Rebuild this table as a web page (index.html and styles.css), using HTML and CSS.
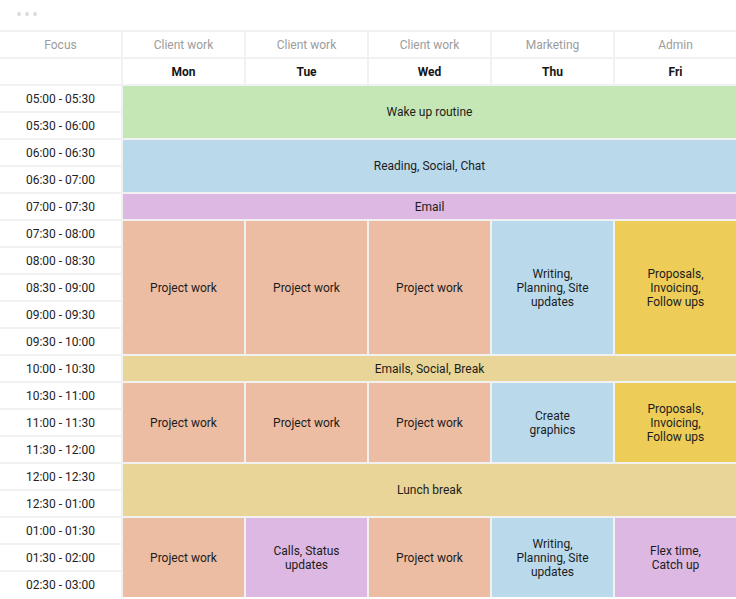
FILE: index.html
```html
<!DOCTYPE html>
<html>
<head>
<meta charset="utf-8">
<link rel="stylesheet" href="styles.css">
</head>
<body>
<div class="topbar"><span class="dot"></span><span class="dot"></span><span class="dot"></span></div>
<div class="grid">
  <div class="cell head">Focus</div>
  <div class="cell head">Client work</div>
  <div class="cell head">Client work</div>
  <div class="cell head">Client work</div>
  <div class="cell head">Marketing</div>
  <div class="cell head">Admin</div>

  <div class="cell day"></div>
  <div class="cell day">Mon</div>
  <div class="cell day">Tue</div>
  <div class="cell day">Wed</div>
  <div class="cell day">Thu</div>
  <div class="cell day">Fri</div>

  <div class="cell time r3">05:00 - 05:30</div>
  <div class="cell time r4">05:30 - 06:00</div>
  <div class="cell time r5">06:00 - 06:30</div>
  <div class="cell time r6">06:30 - 07:00</div>
  <div class="cell time r7">07:00 - 07:30</div>
  <div class="cell time r8">07:30 - 08:00</div>
  <div class="cell time r9">08:00 - 08:30</div>
  <div class="cell time r10">08:30 - 09:00</div>
  <div class="cell time r11">09:00 - 09:30</div>
  <div class="cell time r12">09:30 - 10:00</div>
  <div class="cell time r13">10:00 - 10:30</div>
  <div class="cell time r14">10:30 - 11:00</div>
  <div class="cell time r15">11:00 - 11:30</div>
  <div class="cell time r16">11:30 - 12:00</div>
  <div class="cell time r17">12:00 - 12:30</div>
  <div class="cell time r18">12:30 - 01:00</div>
  <div class="cell time r19">01:00 - 01:30</div>
  <div class="cell time r20">01:30 - 02:00</div>
  <div class="cell time r21">02:30 - 03:00</div>

  <div class="cell block green wide s-wake">Wake up routine</div>
  <div class="cell block blue wide s-read">Reading, Social, Chat</div>
  <div class="cell block purple wide s-email">Email</div>

  <div class="cell block salmon c2 s-am1">Project work</div>
  <div class="cell block salmon c3 s-am1">Project work</div>
  <div class="cell block salmon c4 s-am1">Project work</div>
  <div class="cell block blue c5 s-am1">Writing,<br>Planning, Site<br>updates</div>
  <div class="cell block gold c6 s-am1">Proposals,<br>Invoicing,<br>Follow ups</div>

  <div class="cell block tan wide s-break">Emails, Social, Break</div>

  <div class="cell block salmon c2 s-am2">Project work</div>
  <div class="cell block salmon c3 s-am2">Project work</div>
  <div class="cell block salmon c4 s-am2">Project work</div>
  <div class="cell block blue c5 s-am2">Create<br>graphics</div>
  <div class="cell block gold c6 s-am2">Proposals,<br>Invoicing,<br>Follow ups</div>

  <div class="cell block tan wide s-lunch">Lunch break</div>

  <div class="cell block salmon c2 s-pm">Project work</div>
  <div class="cell block purple c3 s-pm">Calls, Status<br>updates</div>
  <div class="cell block salmon c4 s-pm">Project work</div>
  <div class="cell block blue c5 s-pm">Writing,<br>Planning, Site<br>updates</div>
  <div class="cell block purple c6 s-pm">Flex time,<br>Catch up</div>
</div>
</body>
</html>
```
FILE: styles.css
```css
html, body {
  margin: 0;
  padding: 0;
  background: #ffffff;
  font-family: Roboto, "Liberation Sans", Arial, sans-serif;
}

.topbar {
  height: 30px;
  display: flex;
  align-items: center;
  gap: 4px;
  padding-left: 17px;
  padding-bottom: 2px;
  box-sizing: border-box;
}

.dot {
  width: 4px;
  height: 4px;
  border-radius: 50%;
  background: #dcdcdc;
}

.grid {
  display: grid;
  grid-template-columns: 121px repeat(5, 1fr);
  grid-auto-rows: 25px;
  gap: 2px;
  padding-top: 2px;
  background: #f1f1f1;
}

.cell {
  display: flex;
  align-items: center;
  justify-content: center;
  text-align: center;
  font-size: 12px;
  line-height: 14px;
  background: #ffffff;
  color: #1e1e1e;
}

.head {
  color: #9c9c9c;
  font-size: 12px;
}

.day {
  font-weight: bold;
  color: #151515;
}

.time {
  grid-column: 1;
  color: #222222;
}

.r3 { grid-row: 3; }
.r4 { grid-row: 4; }
.r5 { grid-row: 5; }
.r6 { grid-row: 6; }
.r7 { grid-row: 7; }
.r8 { grid-row: 8; }
.r9 { grid-row: 9; }
.r10 { grid-row: 10; }
.r11 { grid-row: 11; }
.r12 { grid-row: 12; }
.r13 { grid-row: 13; }
.r14 { grid-row: 14; }
.r15 { grid-row: 15; }
.r16 { grid-row: 16; }
.r17 { grid-row: 17; }
.r18 { grid-row: 18; }
.r19 { grid-row: 19; }
.r20 { grid-row: 20; }
.r21 { grid-row: 21; }

.block { color: #1c1c1c; }

.wide { grid-column: 2 / 7; }
.c2 { grid-column: 2; }
.c3 { grid-column: 3; }
.c4 { grid-column: 4; }
.c5 { grid-column: 5; }
.c6 { grid-column: 6; }

.s-wake { grid-row: 3 / 5; }
.s-read { grid-row: 5 / 7; }
.s-email { grid-row: 7 / 8; }
.s-am1 { grid-row: 8 / 13; }
.s-break { grid-row: 13 / 14; }
.s-am2 { grid-row: 14 / 17; }
.s-lunch { grid-row: 17 / 19; }
.s-pm { grid-row: 19 / 22; }

.green { background: #c4e7b5; }
.blue { background: #badaec; }
.purple { background: #dcb8e3; }
.salmon { background: #ecbda3; }
.tan { background: #e9d597; }
.gold { background: #edcd58; }
```
